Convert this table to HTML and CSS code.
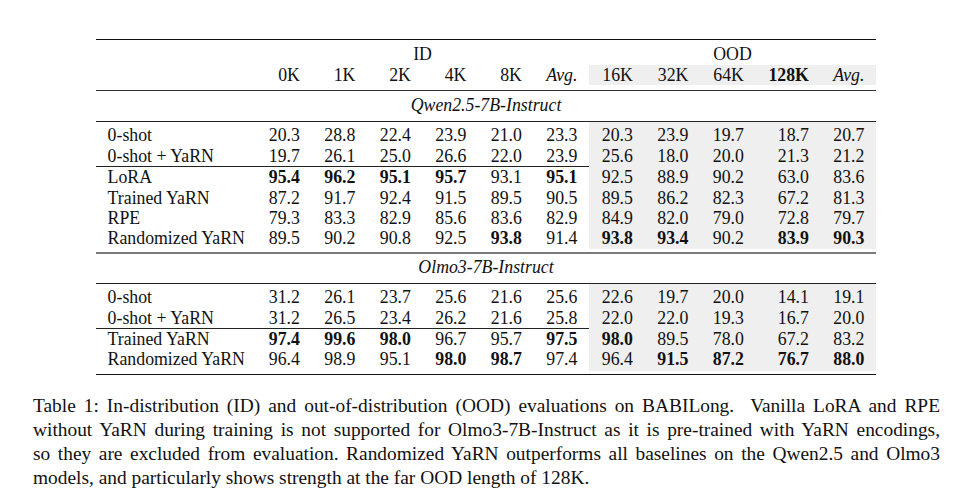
FILE: index.html
```html
<!DOCTYPE html>
<html lang="en">
<head>
<meta charset="utf-8">
<title>Table 1: BABILong evaluations</title>
<link rel="stylesheet" href="styles.css">
</head>
<body>
<figure class="figure">
  <table class="results">
    <colgroup>
      <col class="col-label">
      <col class="col-num" span="9">
      <col class="col-wide">
      <col class="col-num">
    </colgroup>
    <thead>
      <tr class="group-row">
        <th></th>
        <th colspan="6" class="group">ID</th>
        <th colspan="5" class="group">OOD</th>
      </tr>
      <tr class="head-row">
        <th></th>
        <th>0K</th><th>1K</th><th>2K</th><th>4K</th><th>8K</th><th><i>Avg.</i></th>
        <th class="ood">16K</th><th class="ood">32K</th><th class="ood">64K</th><th class="ood"><b>128K</b></th><th class="ood"><i>Avg.</i></th>
      </tr>
      <tr class="gap gap-head"><td colspan="12"></td></tr>
    </thead>
    <tbody>
      <tr class="section section-first"><td colspan="12"><i>Qwen2.5-7B-Instruct</i></td></tr>
      <tr class="first">
        <td class="label">0-shot</td>
        <td>20.3</td><td>28.8</td><td>22.4</td><td>23.9</td><td>21.0</td><td>23.3</td>
        <td class="ood">20.3</td><td class="ood">23.9</td><td class="ood">19.7</td><td class="ood">18.7</td><td class="ood">20.7</td>
      </tr>
      <tr class="split">
        <td class="label">0-shot + YaRN</td>
        <td>19.7</td><td>26.1</td><td>25.0</td><td>26.6</td><td>22.0</td><td>23.9</td>
        <td class="ood">25.6</td><td class="ood">18.0</td><td class="ood">20.0</td><td class="ood">21.3</td><td class="ood">21.2</td>
      </tr>
      <tr>
        <td class="label">LoRA</td>
        <td><b>95.4</b></td><td><b>96.2</b></td><td><b>95.1</b></td><td><b>95.7</b></td><td>93.1</td><td><b>95.1</b></td>
        <td class="ood">92.5</td><td class="ood">88.9</td><td class="ood">90.2</td><td class="ood">63.0</td><td class="ood">83.6</td>
      </tr>
      <tr>
        <td class="label">Trained YaRN</td>
        <td>87.2</td><td>91.7</td><td>92.4</td><td>91.5</td><td>89.5</td><td>90.5</td>
        <td class="ood">89.5</td><td class="ood">86.2</td><td class="ood">82.3</td><td class="ood">67.2</td><td class="ood">81.3</td>
      </tr>
      <tr>
        <td class="label">RPE</td>
        <td>79.3</td><td>83.3</td><td>82.9</td><td>85.6</td><td>83.6</td><td>82.9</td>
        <td class="ood">84.9</td><td class="ood">82.0</td><td class="ood">79.0</td><td class="ood">72.8</td><td class="ood">79.7</td>
      </tr>
      <tr>
        <td class="label">Randomized YaRN</td>
        <td>89.5</td><td>90.2</td><td>90.8</td><td>92.5</td><td><b>93.8</b></td><td>91.4</td>
        <td class="ood"><b>93.8</b></td><td class="ood"><b>93.4</b></td><td class="ood">90.2</td><td class="ood"><b>83.9</b></td><td class="ood"><b>90.3</b></td>
      </tr>
      <tr class="gap gap-mid"><td colspan="12"></td></tr>
    </tbody>
    <tbody>
      <tr class="section section-second"><td colspan="12"><i>Olmo3-7B-Instruct</i></td></tr>
      <tr class="first">
        <td class="label">0-shot</td>
        <td>31.2</td><td>26.1</td><td>23.7</td><td>25.6</td><td>21.6</td><td>25.6</td>
        <td class="ood">22.6</td><td class="ood">19.7</td><td class="ood">20.0</td><td class="ood">14.1</td><td class="ood">19.1</td>
      </tr>
      <tr class="split">
        <td class="label">0-shot + YaRN</td>
        <td>31.2</td><td>26.5</td><td>23.4</td><td>26.2</td><td>21.6</td><td>25.8</td>
        <td class="ood">22.0</td><td class="ood">22.0</td><td class="ood">19.3</td><td class="ood">16.7</td><td class="ood">20.0</td>
      </tr>
      <tr>
        <td class="label">Trained YaRN</td>
        <td><b>97.4</b></td><td><b>99.6</b></td><td><b>98.0</b></td><td>96.7</td><td>95.7</td><td><b>97.5</b></td>
        <td class="ood"><b>98.0</b></td><td class="ood">89.5</td><td class="ood">78.0</td><td class="ood">67.2</td><td class="ood">83.2</td>
      </tr>
      <tr class="last">
        <td class="label">Randomized YaRN</td>
        <td>96.4</td><td>98.9</td><td>95.1</td><td><b>98.0</b></td><td><b>98.7</b></td><td>97.4</td>
        <td class="ood">96.4</td><td class="ood"><b>91.5</b></td><td class="ood"><b>87.2</b></td><td class="ood"><b>76.7</b></td><td class="ood"><b>88.0</b></td>
      </tr>
      <tr class="gap gap-end"><td colspan="12"></td></tr>
    </tbody>
  </table>
  <figcaption class="caption">
    <span class="line">Table 1: In-distribution (ID) and out-of-distribution (OOD) evaluations on BABILong. &nbsp;Vanilla LoRA and RPE</span>
    <span class="line">without YaRN during training is not supported for Olmo3-7B-Instruct as it is pre-trained with YaRN encodings,</span>
    <span class="line">so they are excluded from evaluation. Randomized YaRN outperforms all baselines on the Qwen2.5 and Olmo3</span>
    <span class="line line-last">models, and particularly shows strength at the far OOD length of 128K.</span>
  </figcaption>
</figure>
</body>
</html>
```

FILE: styles.css
```css
html, body {
  margin: 0;
  padding: 0;
  background: #ffffff;
}

body {
  font-family: "Liberation Serif", "Times New Roman", serif;
  color: #111111;
}

.figure {
  margin: 0;
  padding: 38.5px 0 0 0;
}

/* ---------- table ---------- */
.results {
  margin-left: 96px;
  width: 780px;
  table-layout: fixed;
  border-collapse: separate;
  border-spacing: 0;
  border-top: 1.5px solid #111111;
  border-bottom: 1.7px solid #111111;
  font-size: 17.8px;
  line-height: 20.4px;
}

.col-label { width: 160px; }
.col-num   { width: 55.5px; }
.col-wide  { width: 65px; }

.results th,
.results td {
  padding: 0 11.6px;
  font-weight: normal;
  text-align: right;
  vertical-align: top;
  white-space: nowrap;
}

.results b { font-weight: bold; }
.results i { font-style: italic; }

.results td.label { text-align: left; }

.results .ood { background: #efefef; }

/* header */
.group-row th { padding-top: 4.8px; }
.results th.group { text-align: center; }

/* spacers between grey blocks and rules */
.results tr.gap td {
  height: 4px;
  padding: 0;
  line-height: 0;
  font-size: 0;
}
.results tr.gap-head td { height: 4.7px; }
.results tr.gap-mid td { height: 3px; }
.results tr.gap-end td { height: 2.8px; }

/* section title rows */
.results tr.section td {
  text-align: center;
}
.results tr.section-first td {
  border-top: 1px solid #333333;
  border-bottom: 1px solid #222222;
  padding-top: 3.8px;
  padding-bottom: 5.8px;
}
.results tr.section-second td {
  border-top: 2px solid #7b7b7b;
  border-bottom: 1px solid #222222;
  padding-top: 3.6px;
  padding-bottom: 5.0px;
}

.results tr.first td { padding-top: 3.5px; }

/* partial rule under zero-shot rows (hidden behind the grey OOD block) */
.results tr.split td { border-bottom: 1px solid #222222; }
.results tr.split td.ood {
  border-bottom: 0;
  padding-bottom: 1px;
}

.results tr.last td.ood { padding-bottom: 1.3px; }

/* ---------- caption ---------- */
.caption {
  margin: 19px 0 0 33px;
  width: 907px;
  font-size: 19.4px;
  line-height: 23.9px;
  color: #111111;
}

.caption .line {
  display: block;
  text-align: justify;
  text-align-last: justify;
}

.caption .line-last {
  text-align: left;
  text-align-last: left;
}
```
